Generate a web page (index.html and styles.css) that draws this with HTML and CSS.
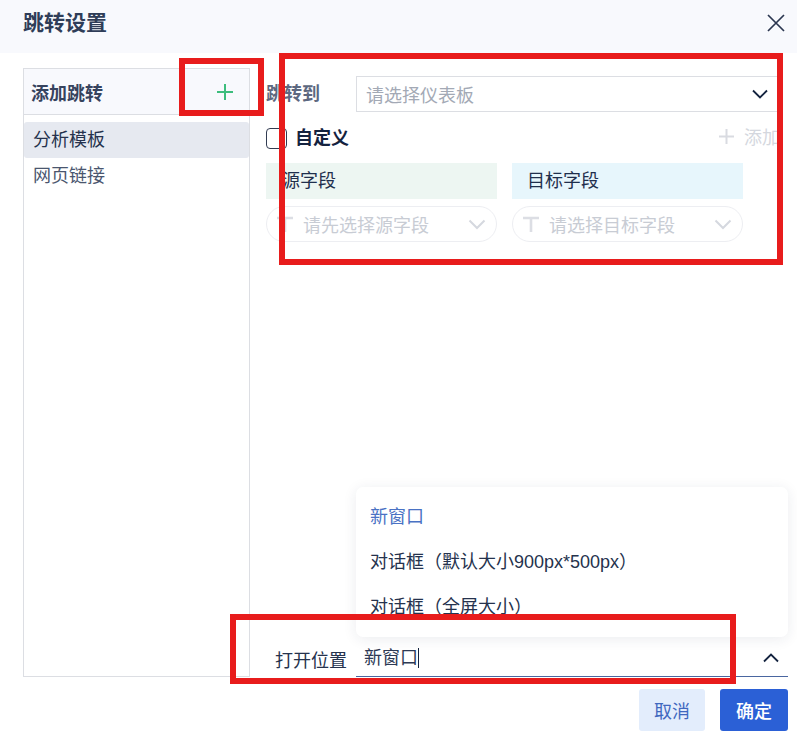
FILE: index.html
```html
<!DOCTYPE html>
<html lang="zh-CN">
<head>
<meta charset="utf-8">
<title>跳转设置</title>
<link rel="stylesheet" href="styles.css">
</head>
<body>
<div class="dialog">
  <header class="head">
    <h1 class="title">跳转设置</h1>
    <svg class="close" width="18" height="18" viewBox="0 0 18 18"><path d="M1 1 17 17M17 1 1 17" fill="none" stroke="#2b3650" stroke-width="1.7"/></svg>
  </header>
  <div class="body">
    <aside class="side">
      <div class="side-head">
        <span class="side-title">添加跳转</span>
        <svg width="16" height="16" viewBox="0 0 16 16"><path d="M8 0V16M0 8H16" fill="none" stroke="#3dbd7d" stroke-width="2"/></svg>
      </div>
      <ul class="side-list">
        <li class="side-item active">分析模板</li>
        <li class="side-item">网页链接</li>
      </ul>
    </aside>
    <main class="main">
      <div class="jump-row">
        <span class="jump-label">跳转到</span>
        <div class="select">
          <span class="select-text">请选择仪表板</span>
          <svg width="16" height="10" viewBox="0 0 16 10"><path d="M1 1.5 8 8.5 15 1.5" fill="none" stroke="#14233f" stroke-width="1.8"/></svg>
        </div>
      </div>
      <div class="custom-row">
        <span class="check"></span>
        <span class="custom-label">自定义</span>
        <span class="add">
          <svg width="17" height="17" viewBox="0 0 17 17"><path d="M8.5 1V16M1 8.5H16" fill="none" stroke="#d9dbe1" stroke-width="2"/></svg>
          <span>添加</span>
        </span>
      </div>
      <div class="fields">
        <div class="field-head green">源字段</div>
        <div class="field-head blue">目标字段</div>
        <div class="pill">
          <svg width="16" height="16" viewBox="0 0 16 16"><path d="M0 2H16M8 2V16" fill="none" stroke="#dcdee4" stroke-width="2.6"/></svg>
          <span class="pill-text">请先选择源字段</span>
          <svg width="18" height="11" viewBox="0 0 18 11"><path d="M1.5 1.5 9 9 16.5 1.5" fill="none" stroke="#d5d8df" stroke-width="2"/></svg>
        </div>
        <div class="pill">
          <svg width="16" height="16" viewBox="0 0 16 16"><path d="M0 2H16M8 2V16" fill="none" stroke="#dcdee4" stroke-width="2.6"/></svg>
          <span class="pill-text">请选择目标字段</span>
          <svg width="18" height="11" viewBox="0 0 18 11"><path d="M1.5 1.5 9 9 16.5 1.5" fill="none" stroke="#d5d8df" stroke-width="2"/></svg>
        </div>
      </div>
      <div class="open-row">
        <span class="open-label">打开位置</span>
        <div class="open-input">
          <span class="open-value">新窗口</span>
          <svg width="16" height="10" viewBox="0 0 16 10"><path d="M1 8.5 8 1.5 15 8.5" fill="none" stroke="#14233f" stroke-width="1.8"/></svg>
          <ul class="menu">
            <li class="menu-item selected">新窗口</li>
            <li class="menu-item">对话框（默认大小900px*500px）</li>
            <li class="menu-item">对话框（全屏大小）</li>
          </ul>
        </div>
      </div>
    </main>
  </div>
  <footer class="foot">
    <button class="btn cancel">取消</button>
    <button class="btn ok">确定</button>
  </footer>
  <div class="mark mark-add"></div>
  <div class="mark mark-main"></div>
  <div class="mark mark-open"></div>
</div>
</body>
</html>
```
FILE: styles.css
```css
* { box-sizing: border-box; }
html, body { margin: 0; padding: 0; background: #fff; }
body {
  font-family: "Liberation Sans", "Noto Sans CJK SC", sans-serif;
  font-size: 18px;
  color: #1b2a47;
  overflow: hidden;
}
ul { list-style: none; margin: 0; padding: 0; }
.dialog { position: relative; width: 797px; height: 738px; overflow: hidden; }

.head {
  height: 53px;
  background: #f8f9fd;
  padding: 0 12px 0 23px;
  display: flex;
  align-items: center;
  justify-content: space-between;
}
.title { margin: 0 0 8px; font-size: 21px; font-weight: 700; color: #2f3d58; line-height: 24px; }
.close { margin-bottom: 7px; }

.body { display: flex; gap: 16px; padding: 15px 0 0 23px; height: 624px; }

.side { width: 227px; height: 609px; border: 1px solid #dcdee3; flex: none; }
.side-head {
  height: 46px;
  background: #f8f9fd;
  border-bottom: 1px solid #dcdee3;
  display: flex;
  align-items: center;
  justify-content: space-between;
  padding: 0 16px 0 7px;
}
.side-title { font-weight: 700; color: #36435e; }
.side-list { padding-top: 7px; }
.side-item { height: 36px; line-height: 36px; padding-left: 9px; color: #4a566e; }
.side-item.active { background: #e6e9f0; border-radius: 3px; color: #25324d; }

.main { flex: 1; min-width: 0; display: flex; flex-direction: column; }

.jump-row { display: flex; align-items: center; height: 36px; margin-top: 8px; gap: 37px; width: 514px; }
.jump-label { font-weight: 700; color: #5d6880; line-height: 36px; width: 53px; flex: none; white-space: nowrap; }
.select {
  flex: 1;
  height: 36px;
  border: 1px solid #dcdee3;
  display: flex;
  align-items: center;
  justify-content: space-between;
  padding: 0 11px 0 9px;
}
.select-text { color: #a3a9b5; }

.custom-row { display: flex; align-items: center; height: 22px; margin-top: 13px; width: 514px; }
.check { width: 21px; height: 21px; margin-top: 4px; border: 1px solid #323c52; border-radius: 4px; flex: none; }
.custom-label { font-weight: 700; margin-left: 8px; color: #14233f; }
.add { margin-left: auto; display: flex; align-items: center; gap: 9px; color: #d4d7de; }

.fields {
  display: grid;
  grid-template-columns: 231px 231px;
  column-gap: 15px;
  row-gap: 7px;
  margin-top: 16px;
}
.field-head { height: 36px; line-height: 36px; padding-left: 16px; color: #1f2f4d; }
.blue { background: #e7f6fc; padding-left: 15px; }
.green { background: #edf6f2; }
.pill {
  height: 36px;
  border: 1px solid #edeef2;
  border-radius: 18px;
  display: flex;
  align-items: center;
  padding: 0 10px;
}
.pill-text { margin-left: 10px; flex: 1; color: #c8ccd4; white-space: nowrap; }

.open-row { margin-top: auto; display: flex; align-items: center; height: 37px; padding-left: 9px; }
.open-label { width: 81px; flex: none; color: #25324d; }
.open-input {
  position: relative;
  width: 432px;
  height: 37px;
  border-bottom: 1.5px solid #4a66a0;
  display: flex;
  align-items: center;
  justify-content: space-between;
  padding: 0 9px 0 8px;
}
.open-value { border-right: 1px solid #14233f; line-height: 20px; color: #2d3a55; }
.menu {
  position: absolute;
  left: 0;
  bottom: 39px;
  width: 432px;
  height: 150px;
  background: #fff;
  border-radius: 7px;
  box-shadow: 0 2px 14px rgba(30, 45, 80, 0.09);
  padding-top: 7px;
}
.menu-item { height: 45px; line-height: 47px; padding-left: 14px; color: #25324d; }
.menu-item.selected { color: #4a72c4; }

.foot { display: flex; justify-content: flex-end; gap: 15px; padding: 12px 9px 0 0; }
.btn {
  font: inherit;
  height: 42px;
  border: 0;
  border-radius: 3px;
  padding: 0;
}
.cancel { width: 66px; background: #e3edfc; color: #3f68bf; }
.ok { width: 68px; background: #2b60d6; color: #fff; font-weight: 500; }

.mark { position: absolute; border: 6px solid #e81c1c; pointer-events: none; }
.mark-add { left: 179px; top: 58px; width: 85px; height: 58px; }
.mark-main { left: 279px; top: 53px; width: 504px; height: 212px; }
.mark-open { left: 230px; top: 614px; width: 506px; height: 70px; }
```
